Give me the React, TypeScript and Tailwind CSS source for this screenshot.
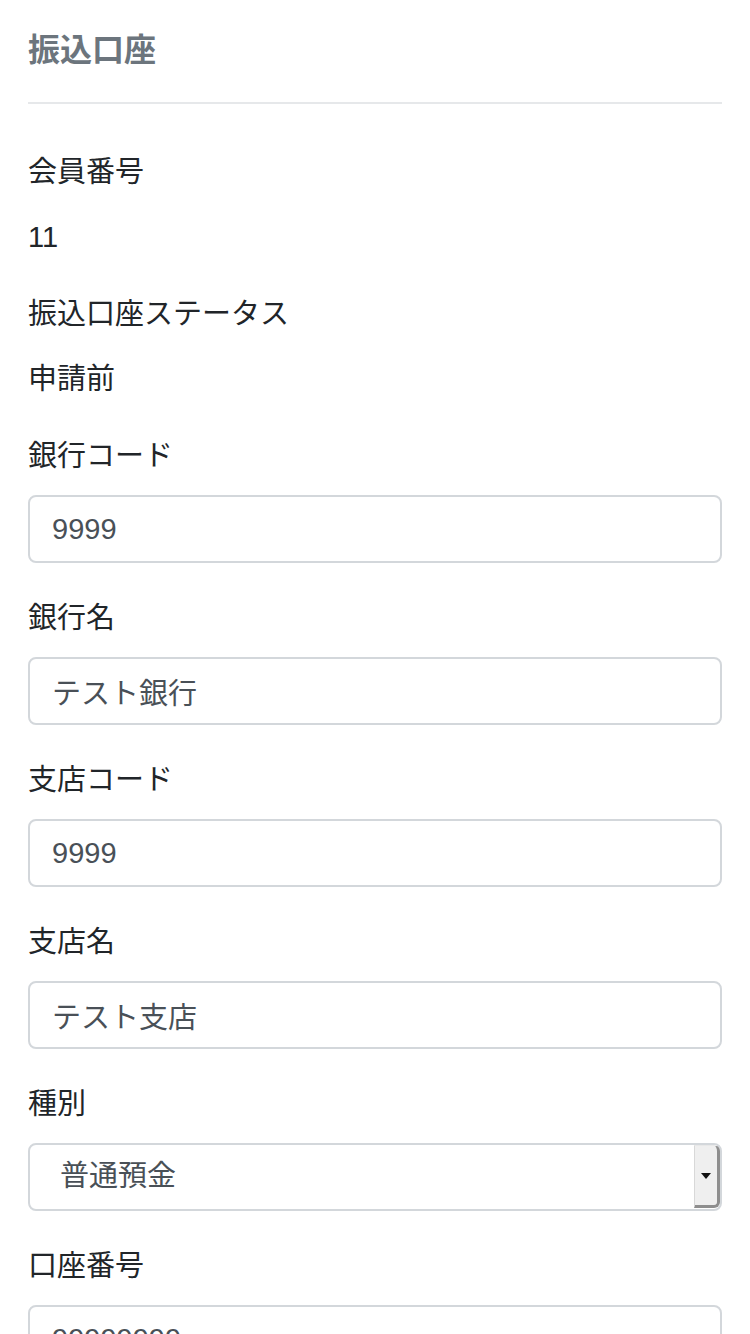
import React from "react";

const font = "font-['Liberation_Sans','Noto_Sans_CJK_JP',sans-serif]";

function Field({ label, value }: { label: string; value: string }) {
  return (
    <div className="mb-[35px]">
      <label className="block text-[29px] leading-[40px] text-[#212529]">{label}</label>
      <input
        readOnly
        defaultValue={value}
        className={`${font} mt-[19px] block h-[68px] w-full rounded-[8px] border-2 border-[#d3d7db] bg-white px-[22px] text-[29px] text-[#495057] outline-none`}
      />
    </div>
  );
}

function Info({ label, value }: { label: string; value: string }) {
  return (
    <div className="mb-[37px]">
      <div className="text-[29px] leading-[40px] text-[#212529]">{label}</div>
      <div className="mt-[25px] text-[29px] leading-[40px] text-[#212529]">{value}</div>
    </div>
  );
}

export default function App(): React.ReactElement {
  return (
    <main className={`${font} min-h-screen bg-white px-[28px] pt-[28px]`}>
      <h1 className="text-[32px] font-bold leading-[44px] text-[#6c757d]">振込口座</h1>
      <hr className="mt-[30px] mb-[48px] border-t-2 border-[#e6e8ea]" />

      <Info label="会員番号" value="11" />
      <Info label="振込口座ステータス" value="申請前" />

      <Field label="銀行コード" value="9999" />
      <Field label="銀行名" value="テスト銀行" />
      <Field label="支店コード" value="9999" />
      <Field label="支店名" value="テスト支店" />

      {/* 種別 select */}
      <div className="mb-[35px]">
        <label className="block text-[29px] leading-[40px] text-[#212529]">種別</label>
        <div className="relative mt-[19px]">
          <select
            defaultValue="普通預金"
            className={`${font} block h-[68px] w-full appearance-none rounded-[8px] border-2 border-[#d3d7db] bg-white pl-[30px] text-[29px] text-[#495057] outline-none`}
          >
            <option>普通預金</option>
            <option>当座預金</option>
          </select>
          <div className="pointer-events-none absolute right-[2px] top-[2px] flex h-[63px] w-[26px] items-center justify-center rounded-tr-[6px] rounded-br-[6px] border-r-[3px] border-b-[3px] border-l border-t border-r-[#8e8e8e] border-b-[#8e8e8e] border-l-[#d8d8d8] border-t-[#e8e8e8] bg-[#efefef]">
            <svg width="10" height="6" viewBox="0 0 10 6">
              <path d="M0 0h10L5 6z" fill="#111" />
            </svg>
          </div>
        </div>
      </div>

      <Field label="口座番号" value="99999999" />
    </main>
  );
}
